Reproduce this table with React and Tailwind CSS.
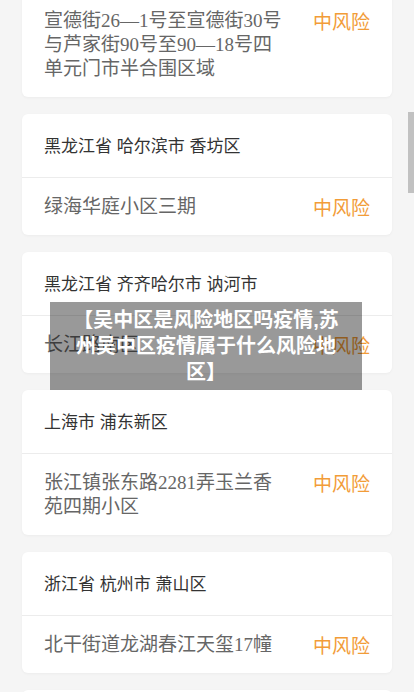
import React from "react";

const cards = [
  { region: "北京市 西城区", addr: "宣德街26—1号至宣德街30号与芦家街90号至90—18号四单元门市半合围区域" },
  { region: "黑龙江省 哈尔滨市 香坊区", addr: "绿海华庭小区三期" },
  { region: "黑龙江省 齐齐哈尔市 讷河市", addr: "长江路南区" },
  { region: "上海市 浦东新区", addr: "张江镇张东路2281弄玉兰香苑四期小区" },
  { region: "浙江省 杭州市 萧山区", addr: "北干街道龙湖春江天玺17幢" },
  { region: "江苏省 苏州市 吴中区", addr: "木渎镇金山路社区" },
];

function Card({ region, addr }) {
  return (
    <div className="bg-white rounded-[6px] shadow-[0_1px_3px_rgba(0,0,0,0.04)] overflow-hidden">
      <div className="h-[63px] px-[22px] pt-[3px] flex items-center text-[17px] text-[#333] font-['Liberation_Sans','Noto_Sans_CJK_SC',sans-serif]">
        {region}
      </div>
      <div className="h-px bg-[#ececec]" />
      <div className="px-[22px] pt-[17px] pb-[16px] flex justify-between items-start">
        <div className="w-[242px] text-[19px] leading-[24px] text-[#666] font-['Liberation_Serif','Noto_Sans_CJK_SC',serif]">
          {addr}
        </div>
        <div className="text-[19px] leading-[24px] text-[#f29c38] font-['Noto_Sans_CJK_SC',sans-serif]">
          中风险
        </div>
      </div>
    </div>
  );
}

export default function App() {
  return (
    <div className="relative w-[414px] h-[692px] overflow-hidden bg-[#f5f5f5]">
      <div className="px-[22px] -mt-[72px] flex flex-col gap-[17px]">
        {cards.map((c, i) => (
          <Card key={i} {...c} />
        ))}
      </div>
      <div className="absolute left-[50px] top-[302px] w-[312px] px-[16px] py-[5px] bg-[rgba(0,0,0,0.4)] text-white text-center font-bold text-[20px] leading-[26px] font-['Liberation_Sans','Noto_Sans_CJK_SC',sans-serif]">
        【吴中区是风险地区吗疫情,苏州吴中区疫情属于什么风险地区】
      </div>
      <div className="absolute right-0 top-[112px] w-[6px] h-[81px] bg-[#c1c1c1]" />
    </div>
  );
}
